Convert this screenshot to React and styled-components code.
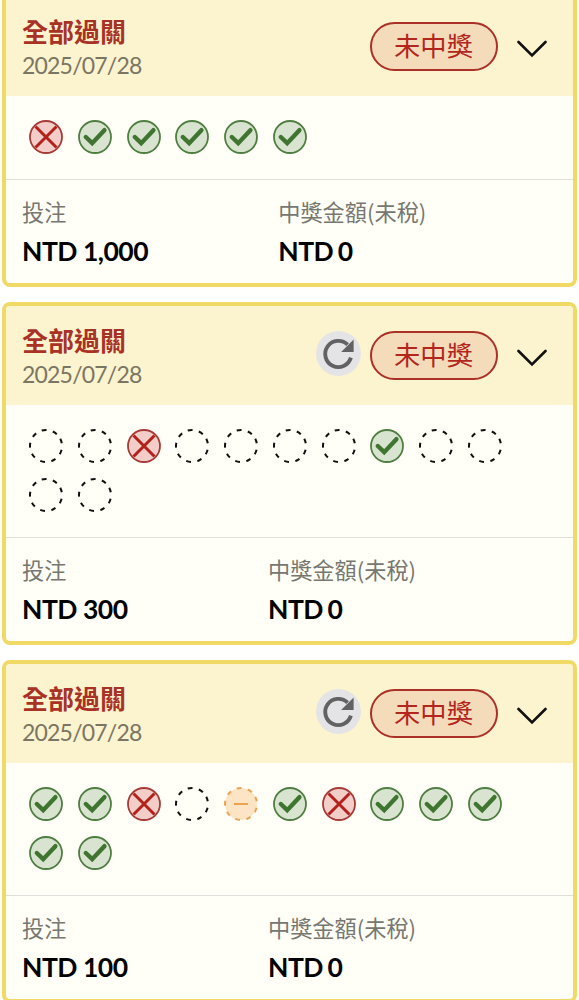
import styled, { createGlobalStyle } from 'styled-components'

const GlobalStyle = createGlobalStyle`
  * {
    box-sizing: border-box;
  }

  body {
    margin: 0;
    background: #fffffe;
    font-family: Lato, 'Noto Sans CJK TC', sans-serif;
  }
`;

const List = styled.main`
  height: 1000px;
  overflow: hidden;
  padding: 0 2.5px 0 1.5px;
  display: flex;
  flex-direction: column;
  gap: 15px;
`;

const Card = styled.article`
  flex-shrink: 0;
  border: 4px solid #f0da65;
  border-radius: 8px;
  background: #fffff7;
  overflow: hidden;

  &:first-child{
    margin-top: -7px;
  }
`;

const Header = styled.header`
  height: 99px;
  padding: 0 26px 0 16.5px;
  display: flex;
  align-items: center;
  background: #fcf3cf;
`;

const Heading = styled.div`
  flex: 1;
  padding-top: 3px;
`;

const Title = styled.h2`
  margin: 0;
  font-size: 26px;
  line-height: 34px;
  font-weight: 700;
  color: #a93226;
`;

const PlayedOn = styled.div`
  font-size: 23px;
  line-height: 32px;
  letter-spacing: -0.8px;
  color: #7b7663;
`;

const RoundButton = styled.button`
  width: 45px;
  height: 45px;
  margin: 0 9px 4px 0;
  padding: 0;
  border: 0;
  border-radius: 50%;
  background: #e4e4e6;

  svg{
    display: block;
  }
`;

const Badge = styled.span`
  width: 128px;
  height: 49px;
  padding-bottom: 1px;
  display: flex;
  align-items: center;
  justify-content: center;
  border: 2px solid #ab3028;
  border-radius: 25px;
  background: #f4dcbb;
  color: #b3261e;
  font-size: 26.3px;
  line-height: 36px;
`;

const Arrow = styled.svg`
  width: 30px;
  height: 18px;
  margin: 5px 0 0 19px;
`;

const Marks = styled.div`
  padding: 24px 24px 25px 23.5px;
  display: flex;
  flex-wrap: wrap;
  gap: 14.75px;
  border-bottom: 1px solid #dededa;
`;

const MarkIcon = styled.svg`
  width: 34px;
  height: 34px;
`;

const Amounts = styled.div`
  height: 103px;
  padding: 14px 16px 0 16.5px;
  display: flex;
`;

const Amount = styled.div`
  flex: 1 1 auto;
`;

const Label = styled.div`
  font-family: 'Noto Sans CJK TC', sans-serif;
  font-size: 22.2px;
  line-height: 34px;
  color: #777771;
`;

const Value = styled.div`
  padding-top: 3px;
  font-size: 26.5px;
  line-height: 40px;
  letter-spacing: -0.5px;
  word-spacing: ${({tight}) => tight ? '-1.5px' : '0'};
  font-weight: 700;
  color: #000;
`;

const DASHES = '4.8 6.37';

function Mark({ type }) {
  return (
    <MarkIcon viewBox="0 0 34 34" fill="none">
      {type === 'lose' && <>
        <circle cx="17" cy="17" r="16" fill="#f3cdc8" stroke="#a63a36" strokeWidth="1.8" />
        <path d="M6.5 6.5L27.5 27.5M27.5 6.5L6.5 27.5" stroke="#b3211c" strokeWidth="3" />
      </>}
      {type === 'win' && <>
        <circle cx="17" cy="17" r="16" fill="#d8e4cf" stroke="#4f7e41" strokeWidth="1.8" />
        <path d="M7.8 17L14.2 23.2L26.4 10.2" stroke="#3f7530" strokeWidth="4.4" strokeLinecap="round" />
      </>}
      {type === 'open' &&
        <circle cx="17" cy="17" r="16" stroke="#111" strokeWidth="2" strokeDasharray={DASHES} transform="rotate(-27 17 17)" />
      }
      {type === 'void' && <>
        <circle cx="17" cy="17" r="16" fill="#fde4c4" stroke="#eaa456" strokeWidth="2" strokeDasharray={DASHES} transform="rotate(-27 17 17)" />
        <path d="M10 17H24" stroke="#eca24f" strokeWidth="1.8" />
      </>}
    </MarkIcon>
  )
}

function Bet({ date, marks, stake, payout, refreshable }) {
  return (
    <Card>
      <Header>
        <Heading>
          <Title>全部過關</Title>
          <PlayedOn>{date}</PlayedOn>
        </Heading>
        {refreshable &&
          <RoundButton aria-label="refresh">
            <svg width="45" height="45" viewBox="0 0 45 45" fill="none">
              <path d="M34.9 26.6A13.1 13.1 0 1 1 31.6 13.7" stroke="#626264" strokeWidth="3.9" />
              <path d="M37.6 8.5V21H25.1Z" fill="#626264" />
            </svg>
          </RoundButton>
        }
        <Badge>未中獎</Badge>
        <Arrow viewBox="0 0 30 18" fill="none">
          <path d="M1.5 2L15 15.5L28.5 2" stroke="#111" strokeWidth="2.6" strokeLinecap="round" />
        </Arrow>
      </Header>
      <Marks>
        {marks.map((type, i) => <Mark key={i} type={type} />)}
      </Marks>
      <Amounts>
        <Amount>
          <Label>投注</Label>
          <Value>NTD {stake}</Value>
        </Amount>
        <Amount>
          <Label>中獎金額(未稅)</Label>
          <Value tight={1}>NTD {payout}</Value>
        </Amount>
      </Amounts>
    </Card>
  )
}

const bets = [
  {
    date: '2025/07/28',
    stake: '1,000',
    payout: '0',
    marks: ['lose', 'win', 'win', 'win', 'win', 'win'],
  },
  {
    date: '2025/07/28',
    stake: '300',
    payout: '0',
    refreshable: true,
    marks: ['open', 'open', 'lose', 'open', 'open', 'open', 'open', 'win', 'open', 'open', 'open', 'open'],
  },
  {
    date: '2025/07/28',
    stake: '100',
    payout: '0',
    refreshable: true,
    marks: ['win', 'win', 'lose', 'open', 'void', 'win', 'lose', 'win', 'win', 'win', 'win', 'win'],
  },
];

export default function App() {
  return (
    <>
      <GlobalStyle />
      <List>
        {bets.map((bet, i) => <Bet key={i} {...bet} />)}
      </List>
    </>
  )
}
